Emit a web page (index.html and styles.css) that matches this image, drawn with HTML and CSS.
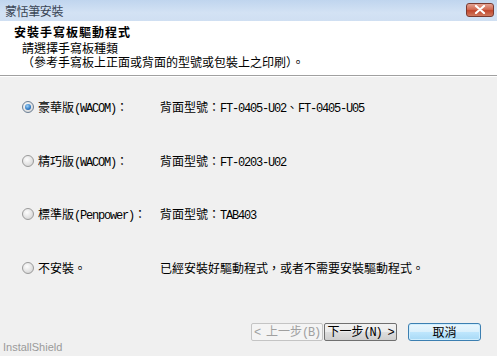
FILE: index.html
```html
<!DOCTYPE html>
<html lang="zh-Hant">
<head>
  <meta charset="UTF-8">
  <title>蒙恬筆安裝</title>
  <link rel="stylesheet" href="styles.css">
</head>
<body>

<div class="window">
  <!-- TITLE BAR -->
  <div class="titlebar">
    <span class="title">蒙恬筆安裝</span>
    <span class="close">
      <svg width="12" height="9" viewBox="0 0 12 9">
        <path d="M2 1 L10 8 M10 1 L2 8" stroke="#fff" stroke-width="2.2" stroke-linecap="round"/>
      </svg>
    </span>
  </div>

  <!-- HEADER -->
  <div class="header">
    <h1>安裝手寫板驅動程式</h1>
    <p>請選擇手寫板種類</p>
    <p>（參考手寫板上正面或背面的型號或包裝上之印刷）。</p>
  </div>

  <!-- OPTIONS -->
  <div class="options">
    <div class="row">
      <span class="radio checked"></span>
      <span class="label">豪華版<span class="mono">(WACOM)</span>：</span>
      <span class="desc">背面型號：<span class="mono">FT-0405-U02</span>、<span class="mono">FT-0405-U05</span></span>
    </div>
    <div class="row">
      <span class="radio"></span>
      <span class="label">精巧版<span class="mono">(WACOM)</span>：</span>
      <span class="desc">背面型號：<span class="mono">FT-0203-U02</span></span>
    </div>
    <div class="row">
      <span class="radio"></span>
      <span class="label">標準版<span class="mono">(Penpower)</span>：</span>
      <span class="desc">背面型號：<span class="mono">TAB403</span></span>
    </div>
    <div class="row">
      <span class="radio"></span>
      <span class="label">不安裝。</span>
      <span class="desc">已經安裝好驅動程式，或者不需要安裝驅動程式。</span>
    </div>
  </div>

  <!-- FOOTER -->
  <div class="footer">
    <span class="brand">InstallShield</span>
    <button class="btn btn-disabled"><span class="mono">&lt; </span>上一步<span class="mono">(B)</span></button>
    <button class="btn btn-default">下一步<span class="mono">(N) &gt;</span></button>
    <button class="btn btn-focus">取消</button>
  </div>
</div>

</body>
</html>
```

FILE: styles.css
```css
body {
  margin: 0;
  background: #f0f0f0;
  font-family: "Noto Sans CJK TC", "Liberation Sans", sans-serif;
  font-size: 12px;
  color: #000;
}
.window {
  width: 497px;
  height: 356px;
  display: flex;
  flex-direction: column;
  background: #f0f0f0;
  overflow: hidden;
}
.mono {
  font-family: "Liberation Mono", "Noto Sans CJK TC", monospace;
  letter-spacing: -1.2px;
}

/* title bar */
.titlebar {
  height: 21px;
  display: flex;
  align-items: center;
  justify-content: space-between;
  padding: 0 3px 0 5px;
  background: linear-gradient(#c0d5ee, #d3e2f4 60%, #cfdff2);
}
.title {
  color: #3b4656;
  letter-spacing: -0.4px;
  line-height: 14px;
}
.close {
  width: 28px;
  height: 14px;
  margin-top: -2px;
  display: flex;
  align-items: center;
  justify-content: center;
  border: 1px solid #7a3a30;
  border-radius: 3px;
  background: linear-gradient(#e3a394, #d26a52 45%, #c2472d 55%, #d0795e);
  box-sizing: border-box;
}

/* header */
.header {
  background: #fff;
  padding: 4px 0 6px 14px;
  border-bottom: 1px solid #a0a0a0;
}
.header h1 {
  margin: 0 0 2px;
  font-size: 12px;
  line-height: 14px;
  font-weight: bold;
  letter-spacing: 1px;
}
.header p {
  margin: 0 0 0 8px;
  line-height: 14px;
}

/* options */
.options {
  flex: 1;
  display: flex;
  flex-direction: column;
  gap: 33.5px;
  padding: 20px 0 0 22px;
  border-top: 1px solid #fff;
}
.row {
  display: flex;
  align-items: center;
  height: 20px;
}
.radio {
  width: 12px;
  height: 12px;
  margin-right: 4px;
  border-radius: 50%;
  border: 1px solid #9a9a9a;
  background: radial-gradient(circle at 40% 35%, #fdfdfd, #dcdcdc 70%, #c8c8c8);
  box-sizing: border-box;
  position: relative;
  flex-shrink: 0;
}
.radio.checked {
  border-color: #6b7f95;
}
.radio.checked::after {
  content: "";
  position: absolute;
  left: 2px;
  top: 2px;
  width: 6px;
  height: 6px;
  border-radius: 50%;
  background: radial-gradient(circle at 40% 35%, #9fd2f7, #2e79c4 60%, #1b4f93);
}
.label {
  width: 122px;
  flex-shrink: 0;
  white-space: nowrap;
}
.desc {
  white-space: nowrap;
}

/* footer */
.footer {
  height: 33px;
  display: flex;
  padding: 0 16px 0 3px;
}
.brand {
  align-self: flex-end;
  margin-right: auto;
  margin-bottom: 2px;
  font-family: "Liberation Sans", Arial, sans-serif;
  font-size: 11px;
  line-height: 14px;
  color: #9a9a9a;
}
.btn {
  width: 73px;
  height: 18px;
  padding: 0;
  font-family: "Noto Sans CJK TC", sans-serif;
  font-size: 12px;
  line-height: 14px;
  border-radius: 2px;
  cursor: pointer;
}
.btn-disabled {
  width: 72px;
  margin-right: 1px;
  color: #a0a0a0;
  border: 1px solid #c4c4c4;
  background: #f4f4f4;
}
.btn-default {
  color: #000;
  border: 1px solid #707070;
  background: linear-gradient(#f2f2f2, #ebebeb 50%, #dddddd 51%, #cfcfcf);
}
.btn-focus {
  margin-left: 11px;
  color: #000;
  border: 1px solid #3c7fb1;
  border-radius: 3px;
  background: linear-gradient(#eaf6fd, #d9f0fc 50%, #bee6fd 51%, #a7d9f5);
  box-shadow: inset 0 0 0 1px #cfeefe;
}
```
